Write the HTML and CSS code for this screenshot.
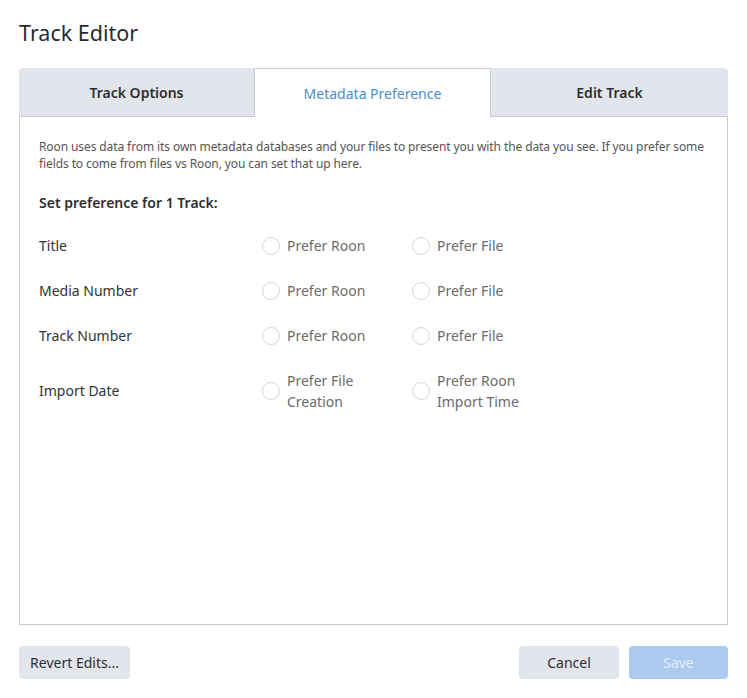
FILE: index.html
```html
<!DOCTYPE html>
<html>
<head>
<meta charset="utf-8">
<link rel="stylesheet" href="styles.css">
</head>
<body>
<div class="page">
  <h1 class="title">Track Editor</h1>
  <div class="tabs">
    <div class="tab tab-first">Track Options</div>
    <div class="tab tab-active">Metadata Preference</div>
    <div class="tab tab-last">Edit Track</div>
  </div>
  <div class="panel">
    <p class="desc">Roon uses data from its own metadata databases and your files to present you with the data you see. If you prefer some fields to come from files vs Roon, you can set that up here.</p>
    <h2 class="subhead">Set preference for 1 Track:</h2>
    <div class="prefs">
      <div class="row">
        <div class="label">Title</div>
        <div class="opt"><span class="radio"></span><span class="opt-text">Prefer Roon</span></div>
        <div class="opt"><span class="radio"></span><span class="opt-text">Prefer File</span></div>
      </div>
      <div class="row">
        <div class="label">Media Number</div>
        <div class="opt"><span class="radio"></span><span class="opt-text">Prefer Roon</span></div>
        <div class="opt"><span class="radio"></span><span class="opt-text">Prefer File</span></div>
      </div>
      <div class="row">
        <div class="label">Track Number</div>
        <div class="opt"><span class="radio"></span><span class="opt-text">Prefer Roon</span></div>
        <div class="opt"><span class="radio"></span><span class="opt-text">Prefer File</span></div>
      </div>
      <div class="row row-tall">
        <div class="label">Import Date</div>
        <div class="opt"><span class="radio"></span><span class="opt-text">Prefer File<br>Creation</span></div>
        <div class="opt"><span class="radio"></span><span class="opt-text">Prefer Roon<br>Import Time</span></div>
      </div>
    </div>
  </div>
  <div class="footer">
    <button class="btn btn-revert">Revert Edits...</button>
    <div class="footer-right">
      <button class="btn btn-cancel">Cancel</button>
      <button class="btn btn-save">Save</button>
    </div>
  </div>
</div>
</body>
</html>
```
FILE: styles.css
```css
html, body {
  margin: 0;
  padding: 0;
  background: #ffffff;
}
body {
  font-family: "Noto Sans", "Open Sans", sans-serif;
  color: #333333;
}
.page {
  padding: 0 19px;
}
.title {
  margin: 0;
  padding-top: 17px;
  font-size: 21.5px;
  font-weight: 400;
  line-height: 32px;
  color: #2b2b2b;
}
.tabs {
  margin-top: 19px;
  display: grid;
  grid-template-columns: 235px 237px 237px;
  height: 49px;
}
.tab {
  display: flex;
  align-items: center;
  justify-content: center;
  background: #e3e5ec;
  font-size: 14px;
  font-weight: 600;
  color: #2e2e2e;
  border-bottom: 1px solid #c9cbd0;
  box-sizing: border-box;
}
.tab-first {
  border-top-left-radius: 4px;
}
.tab-last {
  border-top-right-radius: 4px;
}
.tab-active {
  background: #ffffff;
  color: #4a8fc9;
  font-weight: 400;
  border: 1px solid #c9cbd0;
  border-bottom: none;
}
.panel {
  height: 508px;
  box-sizing: border-box;
  border: 1px solid #c9c9c9;
  border-top: none;
  padding: 21px 19px;
}
.desc {
  margin: 0;
  font-size: 12px;
  line-height: 17px;
  letter-spacing: -0.1px;
  color: #555555;
}
.subhead {
  margin: 21px 0 0;
  font-size: 14px;
  font-weight: 600;
  line-height: 20px;
  color: #2e2e2e;
}
.prefs {
  margin-top: 10px;
  display: flex;
  flex-direction: column;
}
.row {
  display: grid;
  grid-template-columns: 223px 150px 150px;
  align-items: center;
  height: 45px;
}
.row-tall {
  height: 65px;
}
.label {
  font-size: 14px;
  color: #333333;
}
.opt {
  display: flex;
  align-items: center;
  gap: 7px;
}
.radio {
  width: 16px;
  height: 16px;
  border: 1px solid #d6d6d6;
  border-radius: 50%;
  flex: none;
}
.opt-text {
  font-size: 14px;
  line-height: 21px;
  color: #6b6b6b;
}
.footer {
  margin-top: 21px;
  display: flex;
  justify-content: space-between;
}
.footer-right {
  display: flex;
  gap: 10px;
}
.btn {
  font-family: "Noto Sans", "Open Sans", sans-serif;
  font-size: 14px;
  height: 33px;
  padding: 0 9px;
  border: none;
  border-radius: 4px;
  background: #e3e5ec;
  color: #2e2e2e;
}
.btn-revert {
  width: 111px;
  padding: 0;
}
.btn-cancel {
  width: 100px;
}
.btn-save {
  width: 99px;
  background: #aacaef;
  color: #e4eefb;
}
```
